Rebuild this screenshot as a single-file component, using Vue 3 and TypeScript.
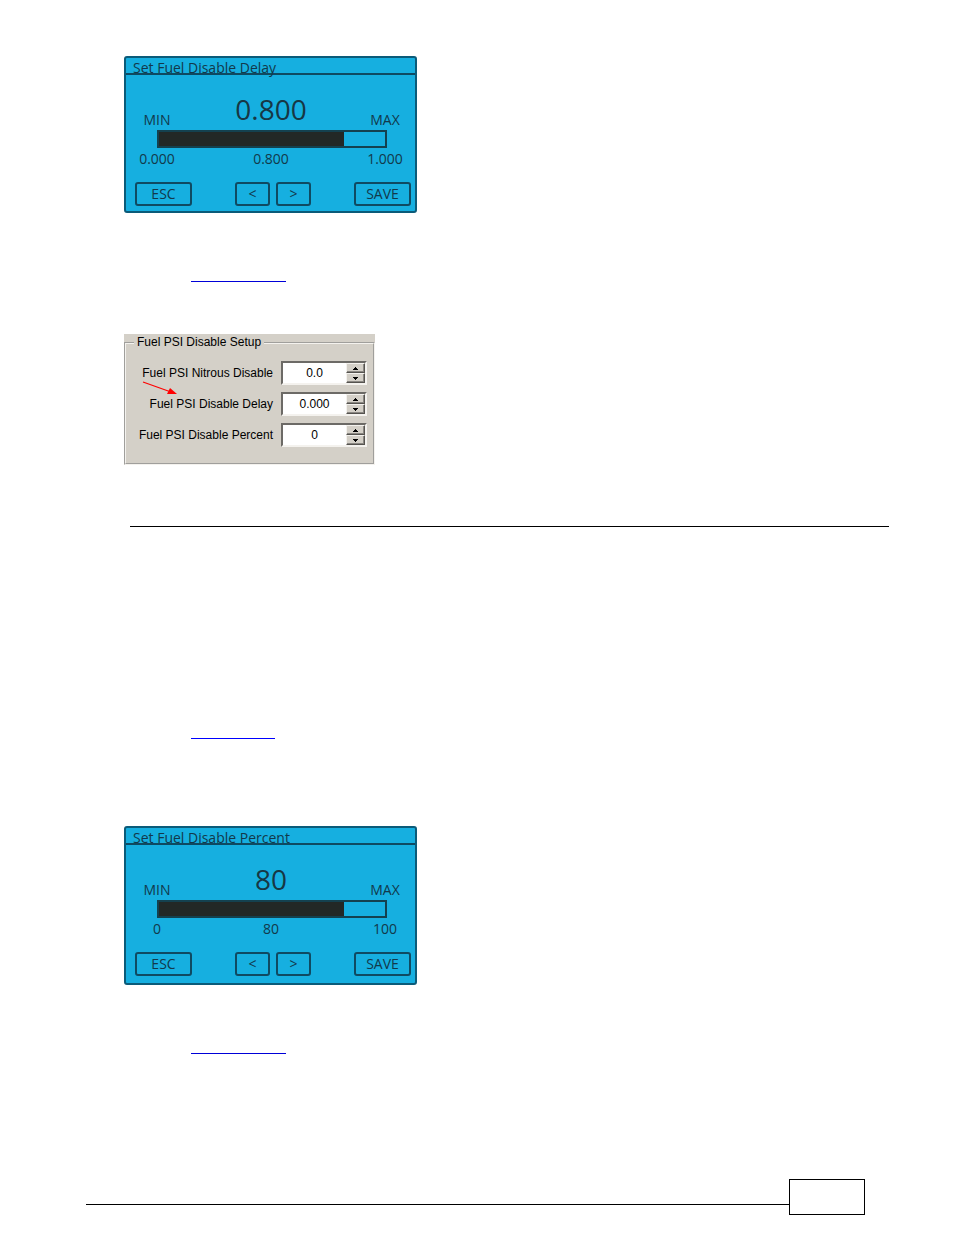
<script setup lang="ts">
import { ref } from 'vue'

interface DeviceScreen {
  id: string
  title: string
  value: string
  min: string
  max: string
  level: number
}

interface Setting {
  id: string
  label: string
  value: string
}

const delay: DeviceScreen = {
  id: 'delay',
  title: 'Set Fuel Disable Delay',
  value: '0.800',
  min: '0.000',
  max: '1.000',
  level: 82,
}

const percent: DeviceScreen = {
  id: 'percent',
  title: 'Set Fuel Disable Percent',
  value: '80',
  min: '0',
  max: '100',
  level: 82,
}

const sections = [delay, percent]

const settings = ref<Setting[]>([
  { id: 'nitrous', label: 'Fuel PSI Nitrous Disable', value: '0.0' },
  { id: 'disable-delay', label: 'Fuel PSI Disable Delay', value: '0.000' },
  { id: 'disable-percent', label: 'Fuel PSI Disable Percent', value: '0' },
])
</script>

<template>
  <main class="page">
    <section v-for="s in sections" :key="s.id" class="section" :class="s.id">
      <div class="device">
        <h2 class="device-title" :id="s.id + '-title'">{{ s.title }}</h2>
        <div class="readout">
          <span class="caption">MIN</span>
          <output class="value">{{ s.value }}</output>
          <span class="caption">MAX</span>
        </div>
        <input
          class="bar"
          type="range"
          min="0"
          max="100"
          :value="s.level"
          :aria-labelledby="s.id + '-title'"
          :style="{ '--level': s.level + '%' }"
        />
        <div class="scale">
          <span>{{ s.min }}</span>
          <span>{{ s.value }}</span>
          <span>{{ s.max }}</span>
        </div>
        <div class="keys">
          <button type="button" class="key wide">ESC</button>
          <div class="arrows">
            <button type="button" class="key">&lt;</button>
            <button type="button" class="key">&gt;</button>
          </div>
          <button type="button" class="key wide">SAVE</button>
        </div>
      </div>
      <div class="underline"></div>

      <template v-if="s.id === 'delay'">
        <div class="panel">
          <fieldset class="group">
            <legend>Fuel PSI Disable Setup</legend>
            <div v-for="item in settings" :key="item.id" class="setting">
              <label :for="item.id">{{ item.label }}</label>
              <div class="spinner">
                <input :id="item.id" v-model="item.value" type="text" />
                <div class="steps">
                  <button type="button" :aria-describedby="item.id">
                    <svg viewBox="0 0 5 3" width="5" height="3"><path d="M2 0h1v1h1v1h1v1H0V2h1V1h1z" /></svg>
                  </button>
                  <button type="button" :aria-describedby="item.id">
                    <svg viewBox="0 0 5 3" width="5" height="3"><path d="M0 0h5v1H4v1H3v1H2V2H1V1H0z" /></svg>
                  </button>
                </div>
              </div>
            </div>
          </fieldset>
          <svg class="pointer" viewBox="0 0 38 16" width="38" height="16">
            <path d="M1 1L29 11" stroke="#f00" stroke-width="1.2" />
            <path d="M35 13L25 13L28 7Z" fill="#f00" />
          </svg>
        </div>
        <hr class="divider" />
        <div class="underline link"></div>
      </template>
    </section>

    <footer class="footer">
      <div class="footer-line"></div>
      <div class="page-number"></div>
    </footer>
  </main>
</template>

<style>
body {
  margin: 0;
  background: #fff;
}
</style>

<style scoped>
.page {
  box-sizing: border-box;
  padding: 56px 65px 20px 86px;
}

.section {
  padding-left: 38px;
}

.device {
  box-sizing: border-box;
  width: 293px;
  padding-bottom: 5px;
  border: 2px solid #0b5b79;
  border-radius: 3px;
  background: #16afe0;
  color: #12394b;
  font-family: "Open Sans", "Noto Sans", sans-serif;
  font-size: 14px;
  line-height: 18px;
}

.percent .device {
  padding-bottom: 7px;
}

.device-title {
  height: 15px;
  margin: 0;
  padding-left: 7px;
  border-bottom: 2px solid #0e4a62;
  font-size: 14px;
  font-weight: 400;
  line-height: 20px;
}

.readout,
.scale {
  display: flex;
  align-items: flex-end;
  justify-content: space-between;
  padding: 0 5px 0 6px;
}

.readout {
  height: 54px;
  padding-bottom: 1px;
}

.caption,
.scale span {
  width: 50px;
  text-align: center;
}

.value {
  margin-bottom: 4px;
  color: #173744;
  font-size: 28px;
  line-height: 32px;
}

.bar {
  display: block;
  box-sizing: border-box;
  width: 230px;
  height: 18px;
  margin: 0 0 2px 31px;
  border: 2px solid #14414f;
  background: linear-gradient(to right, #222826 var(--level), #16afe0 var(--level));
  appearance: none;
}

.bar::-webkit-slider-thumb {
  width: 1px;
  height: 1px;
  appearance: none;
}

.keys {
  display: flex;
  justify-content: space-between;
  margin-top: 14px;
  padding: 0 4px 0 9px;
}

.arrows {
  display: flex;
  gap: 6px;
}

.key {
  box-sizing: border-box;
  width: 35px;
  height: 24px;
  padding: 0;
  border: 2px solid #0f4a62;
  border-radius: 3px;
  background: transparent;
  color: inherit;
  font: inherit;
}

.wide {
  width: 57px;
}

.underline {
  width: 95px;
  height: 1px;
  margin: 68px 0 0 67px;
  background: #0000d8;
}

.underline.link {
  width: 84px;
  margin: 211px 0 87px 67px;
  background: #00f;
}

.panel {
  position: relative;
  box-sizing: border-box;
  width: 251px;
  height: 131px;
  margin-top: 52px;
  background: #d4d0c8;
  color: #000;
  font-family: "Liberation Sans", Arial, sans-serif;
  font-size: 12px;
}

.group {
  box-sizing: border-box;
  height: 131px;
  min-width: 0;
  margin: 0;
  padding: 10px 6px 0 8px;
  border: 2px groove #f4f2ee;
}

.group legend {
  padding: 0 3px;
  line-height: 17px;
}

.setting {
  display: flex;
  align-items: center;
  justify-content: flex-end;
  gap: 8px;
  height: 24px;
  margin-bottom: 7px;
}

.spinner {
  display: flex;
  box-sizing: border-box;
  width: 86px;
  height: 24px;
  border: 2px solid;
  border-color: #6c6a66 #f4f2ee #f4f2ee #6c6a66;
  background: #fff;
}

.spinner input {
  min-width: 0;
  flex: 1;
  padding: 0;
  border: 0;
  background: transparent;
  color: #000;
  font: inherit;
  text-align: center;
}

.steps {
  display: grid;
  grid-template-rows: 1fr 1fr;
  width: 19px;
}

.steps button {
  display: flex;
  align-items: center;
  justify-content: center;
  padding: 0;
  border: 1px solid;
  border-color: #f4f2ee #55534f #55534f #f4f2ee;
  background: #d4d0c8;
  box-shadow: inset -1px -1px #8a8782;
}

.pointer {
  position: absolute;
  top: 47px;
  left: 18px;
}

.divider {
  height: 1px;
  margin: 61px 0 0 6px;
  border: 0;
  background: #000;
}

.footer {
  display: flex;
  margin: 125px 24px 0 0;
}

.footer-line {
  flex: 1;
  height: 1px;
  margin-top: 25px;
  background: #000;
}

.page-number {
  box-sizing: border-box;
  width: 76px;
  height: 36px;
  border: 1px solid #000;
}
</style>
